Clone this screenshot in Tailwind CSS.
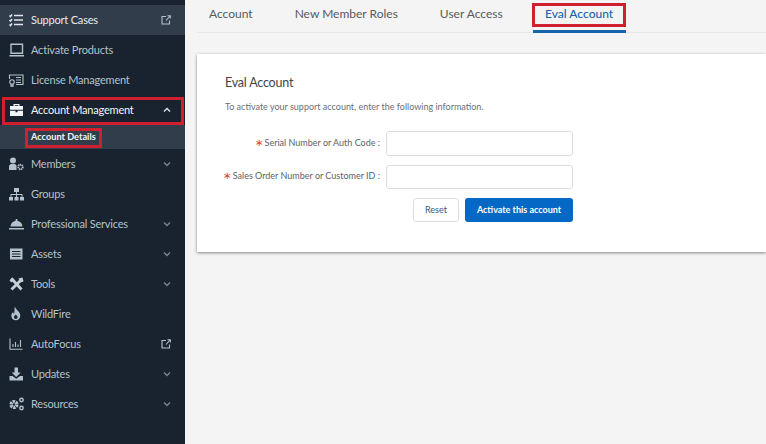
<!doctype html>
<html>
<head>
<meta charset="utf-8">
<script src="https://cdn.jsdelivr.net/npm/@tailwindcss/browser@4"></script>
</head>
<body class="bg-[#f4f4f4] font-['Lato','Noto_Sans',sans-serif]">
<div class="relative flex w-[766px] h-[444px] overflow-hidden">
  <aside class="w-[185px] shrink-0 bg-[#19222f] pt-[5px] text-[11px] tracking-[-0.2px] text-[#b4c3cb]">
    <div class="flex items-center h-[30px] bg-[#323d4c] text-[#e6edf0]">
      <svg class="w-[31px] h-[14px] shrink-0" viewBox="0 0 31 14" fill="none" stroke="#e0e6ea" stroke-width="1.5"><path d="M14 2.500h9M14 7h9M14 11.500h9M9.500 2.500l1 1 1.500-2M9.500 7l1 1 1.500-2M9.500 11.500l1 1 1.500-2"/></svg>
      <span class="flex-1">Support Cases</span>
      <svg class="w-[10px] h-[10px] mr-[14px]" viewBox="0 0 10 10" fill="none" stroke="#b4c3cb" stroke-width="1.100"><path d="M5 1.500H1v7.500h7.500V5.500M5 5.500L9 1M6.500 .8H9.300V3.500"/></svg>
    </div>
    <div class="flex items-center h-[30px]">
      <svg class="w-[31px] h-[14px] shrink-0" viewBox="0 0 31 14" fill="none" stroke="#b4c3cb" stroke-width="1.400"><path d="M11 1.200h11.500v9H11zM9.500 12.800H24"/></svg>
      <span class="flex-1">Activate Products</span>
    </div>
    <div class="flex items-center h-[30px]">
      <svg class="w-[31px] h-[14px] shrink-0" viewBox="0 0 31 14" fill="none" stroke="#b4c3cb" stroke-width="1.100"><path d="M9.500 6V2h13.500v9.500h-7"/><circle cx="12" cy="9" r="2.200"/><path d="M11 11v2.500l1-.7 1 .7V11M16 4.500h5M16 7h5M16 9.500h5"/></svg>
      <span class="flex-1">License Management</span>
    </div>
    <div class="flex items-center h-[30px] text-[#f2f5f7]">
      <svg class="w-[31px] h-[14px] shrink-0" viewBox="0 0 31 14" fill="#f2f5f7"><path d="M13.500 3V1h6v2h3.500v3.800h-13V3zm1.200 0h3.600V2.200h-3.600zM10 7.800h5.500v1.400h2V7.800H23V13H10z"/></svg>
      <span class="flex-1">Account Management</span>
      <svg class="w-[8px] h-[6px] mr-[14px]" viewBox="0 0 8 6" fill="none" stroke="#d5dde2" stroke-width="1.500"><path d="M1 4.500l3-3 3 3"/></svg>
    </div>
    <div class="flex items-center h-[24px] bg-[#323d4c] pl-[31px] text-[9.200px] tracking-normal font-bold text-[#f2f5f7]">Account Details</div>
    <div class="flex items-center h-[30px]">
      <svg class="w-[31px] h-[14px] shrink-0" viewBox="0 0 31 14" fill="#b4c3cb"><circle cx="13" cy="3.500" r="3"/><path d="M9 13V9.500c0-1.500 1-2.500 2.500-2.500h3.500l1.500 1.500V13z"/><circle cx="20.500" cy="10" r="2.300" fill="none" stroke="#b4c3cb" stroke-width="1.800" stroke-dasharray="1.300 .5"/></svg>
      <span class="flex-1">Members</span>
      <svg class="w-[8px] h-[6px] mr-[14px]" viewBox="0 0 8 6" fill="none" stroke="#74838f" stroke-width="1.500"><path d="M1 1.500l3 3 3-3"/></svg>
    </div>
    <div class="flex items-center h-[30px]">
      <svg class="w-[31px] h-[14px] shrink-0" viewBox="0 0 31 14" fill="#b4c3cb"><path d="M14 1h5v4h-5zM9 10h4v3.500H9zM14.500 10h4v3.500h-4zM20 10h4v3.500h-4z"/><path d="M16 5h1v2h5.500v3h-1V8h-4.500v2h-1V8h-4.500v2h-1V7H16z"/></svg>
      <span class="flex-1">Groups</span>
    </div>
    <div class="flex items-center h-[30px]">
      <svg class="w-[31px] h-[14px] shrink-0" viewBox="0 0 31 14" fill="#b4c3cb"><path d="M10.500 9.500c.5-3.500 3-5.700 6-5.700s5.500 2.200 6 5.700zM15.700 2h1.600v2h-1.600zM9 11h15v1.500H9z"/></svg>
      <span class="flex-1">Professional Services</span>
      <svg class="w-[8px] h-[6px] mr-[14px]" viewBox="0 0 8 6" fill="none" stroke="#74838f" stroke-width="1.500"><path d="M1 1.500l3 3 3-3"/></svg>
    </div>
    <div class="flex items-center h-[30px]">
      <svg class="w-[31px] h-[14px] shrink-0" viewBox="0 0 31 14" fill="none"><rect x="10" y="1.500" width="12.500" height="11" fill="#b4c3cb"/><path d="M12 4.500h8.500M12 7h8.500M12 9.500h8.500" stroke="#19222f" stroke-width="1.100"/></svg>
      <span class="flex-1">Assets</span>
      <svg class="w-[8px] h-[6px] mr-[14px]" viewBox="0 0 8 6" fill="none" stroke="#74838f" stroke-width="1.500"><path d="M1 1.500l3 3 3-3"/></svg>
    </div>
    <div class="flex items-center h-[30px]">
      <svg class="w-[31px] h-[14px] shrink-0" viewBox="0 0 31 14" fill="none" stroke="#c5d0d6"><path d="M11.500 1.500l10 11" stroke-width="2.800"/><path d="M21.500 2.500l-10 10" stroke-width="2.800"/><path d="M18.500 1.500l4-1 1 4-3 1zM9.500 3.500l2.500-3 2 2-2.500 3z" fill="#c5d0d6" stroke="none"/></svg>
      <span class="flex-1">Tools</span>
      <svg class="w-[8px] h-[6px] mr-[14px]" viewBox="0 0 8 6" fill="none" stroke="#74838f" stroke-width="1.500"><path d="M1 1.500l3 3 3-3"/></svg>
    </div>
    <div class="flex items-center h-[30px]">
      <svg class="w-[31px] h-[14px] shrink-0" viewBox="0 0 31 14" fill="#b4c3cb"><path fill-rule="evenodd" d="M15.500.5c.5 2.500 4.800 4.300 4.800 8 0 2.800-2 4.800-4.500 4.800s-4.500-2-4.500-4.500c0-1.800 1-3 1.800-3.800.2 1 .5 1.500 1 1.800.4-2 .6-4.500.4-6.300zm.3 7c-.8 1-1.800 1.500-1.800 2.800 0 1 .8 1.700 1.800 1.700s1.800-.7 1.800-1.700c0-1.200-1-1.700-1.800-2.800z"/></svg>
      <span class="flex-1">WildFire</span>
    </div>
    <div class="flex items-center h-[30px]">
      <svg class="w-[31px] h-[14px] shrink-0" viewBox="0 0 31 14" fill="none" stroke="#b4c3cb" stroke-width="1.100"><path d="M10 1.500v10.700h12.500M13 10V7M15.500 10V5M18 10V7.500M20.500 10V3"/></svg>
      <span class="flex-1">AutoFocus</span>
      <svg class="w-[10px] h-[10px] mr-[14px]" viewBox="0 0 10 10" fill="none" stroke="#b4c3cb" stroke-width="1.100"><path d="M5 1.500H1v7.500h7.500V5.500M5 5.500L9 1M6.500 .8H9.300V3.500"/></svg>
    </div>
    <div class="flex items-center h-[30px]">
      <svg class="w-[31px] h-[14px] shrink-0" viewBox="0 0 31 14" fill="#b4c3cb"><path d="M14.500.5h3.500v5h2.700l-4.500 4.500-4.500-4.500h2.800zM9.500 9h3l3.700 2.700L20 9h3v4.500H9.500z"/></svg>
      <span class="flex-1">Updates</span>
      <svg class="w-[8px] h-[6px] mr-[14px]" viewBox="0 0 8 6" fill="none" stroke="#74838f" stroke-width="1.500"><path d="M1 1.500l3 3 3-3"/></svg>
    </div>
    <div class="flex items-center h-[30px]">
      <svg class="w-[31px] h-[14px] shrink-0" viewBox="0 0 31 14" fill="none" stroke="#b4c3cb"><circle cx="14" cy="7.500" r="2.800" stroke-width="3.600" stroke-dasharray="2.200 .7"/><circle cx="21.500" cy="3" r="1.700" stroke-width="1.400"/><circle cx="21.500" cy="11" r="1.700" stroke-width="1.400"/></svg>
      <span class="flex-1">Resources</span>
      <svg class="w-[8px] h-[6px] mr-[14px]" viewBox="0 0 8 6" fill="none" stroke="#74838f" stroke-width="1.500"><path d="M1 1.500l3 3 3-3"/></svg>
    </div>
  </aside>

  <main class="flex-1 pl-[12px]">
    <nav class="flex gap-[18px] h-[33px] border-b border-[#e8e8e8] text-[12px] text-[#555b61]">
      <div class="px-[12px] leading-[28px]">Account</div>
      <div class="px-[12px] leading-[28px]">New Member Roles</div>
      <div class="px-[12px] leading-[28px]">User Access</div>
      <div class="px-[12px] w-[93px] h-[33px] border-b-[3px] border-[#1466ac] text-center font-medium text-[#1466ac] leading-[28px] whitespace-nowrap">Eval Account</div>
    </nav>
    <section class="mt-[21px] h-[198px] bg-white shadow-[0_1px_3px_rgba(0,0,0,0.45)] pl-[28px] pt-[20px]">
      <h1 class="text-[12.500px] tracking-[-0.2px] leading-[17px] text-[#3f444a]">Eval Account</h1>
      <p class="mt-[10px] text-[9px] leading-[12px] text-[#6b7075]">To activate your support account, enter the following information.</p>
      <div class="mt-[18px] w-[348px]">
        <div class="flex items-center justify-end gap-[6px] text-[9px] text-[#5d6268]">
          <span class="flex items-center gap-[2px] whitespace-nowrap -translate-y-[1px]"><span class="text-[#d8413a] text-[10px] leading-none -translate-y-[1px]">∗</span>Serial Number or Auth Code :</span>
          <div class="w-[187px] shrink-0 h-[25px] rounded-[3px] border border-[#dcdfe2] bg-white"></div>
        </div>
        <div class="mt-[9px] flex items-center justify-end gap-[6px] text-[9px] text-[#5d6268]">
          <span class="flex items-center gap-[2px] whitespace-nowrap -translate-y-[1px]"><span class="text-[#d8413a] text-[10px] leading-none -translate-y-[1px]">∗</span>Sales Order Number or Customer ID :</span>
          <div class="w-[187px] shrink-0 h-[24px] rounded-[3px] border border-[#dcdfe2] bg-white"></div>
        </div>
        <div class="mt-[9px] flex justify-end gap-[6px]">
          <div class="flex items-center justify-center w-[46px] h-[24px] rounded-[3px] border border-[#dcdfe2] bg-white text-[9px] text-[#35597c]">Reset</div>
          <div class="flex items-center justify-center w-[108px] h-[24px] rounded-[3px] bg-[#0568c4] text-[9px] font-bold text-white">Activate this account</div>
        </div>
      </div>
    </section>
  </main>

  <div class="absolute left-[2px] top-[97px] w-[182px] h-[28px] border-[3px] border-[#d0202f]"></div>
  <div class="absolute left-[25px] top-[128px] w-[77px] h-[20px] border-[3px] border-[#d0202f]"></div>
  <div class="absolute left-[532px] top-[3px] w-[94px] h-[24px] border-[3px] border-[#d0202f]"></div>
</div>
</body>
</html>
